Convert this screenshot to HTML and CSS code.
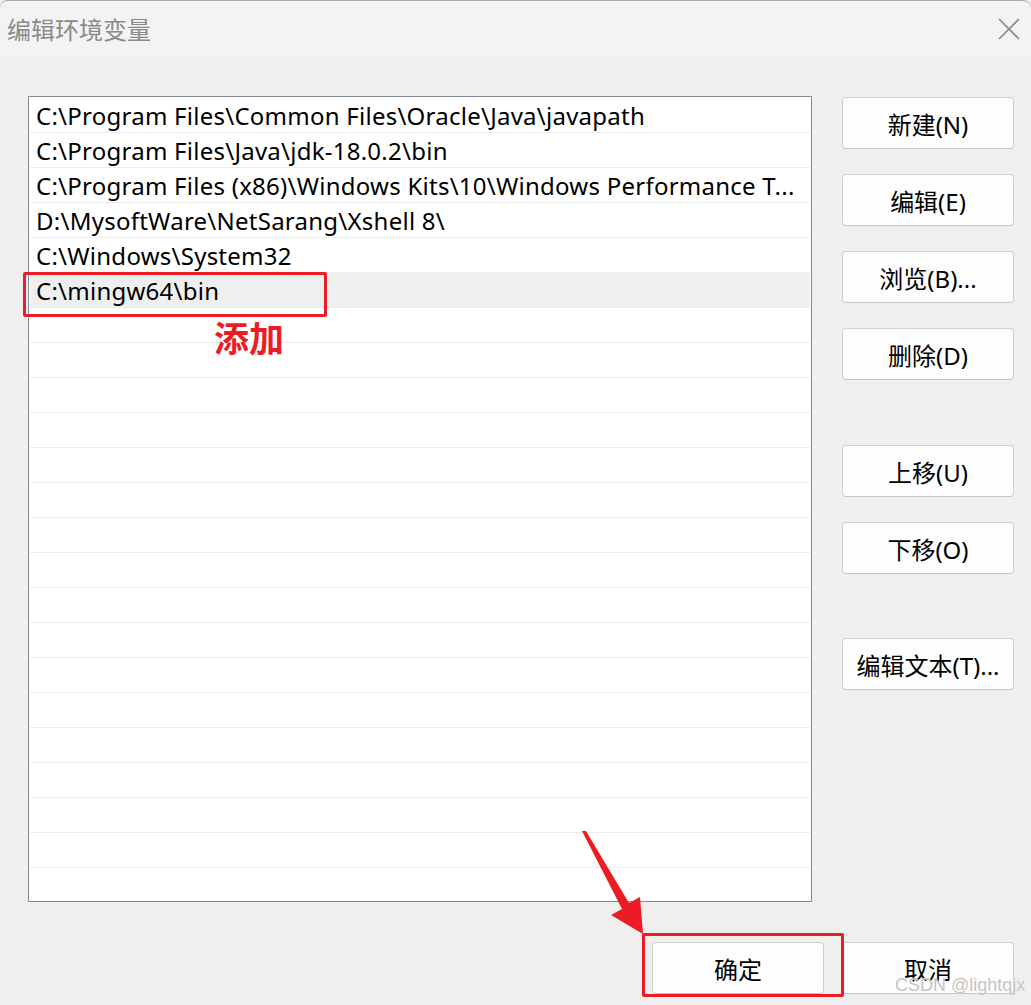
FILE: index.html
```html
<!DOCTYPE html>
<html lang="zh-CN">
<head>
<meta charset="UTF-8">
<meta name="viewport" content="width=device-width, initial-scale=1.0">
<title>编辑环境变量</title>
<link rel="stylesheet" href="styles.css">
</head>
<body>
<div class="window">
    <div class="titlebar">
        <span class="title">编辑环境变量</span>
        <svg class="close" width="22" height="22" viewBox="0 0 22 22">
            <path d="M1 1 L21 21 M21 1 L1 21" stroke="#8a8a8a" stroke-width="1.6" fill="none"/>
        </svg>
    </div>

    <div class="main">
        <div class="list">
            <div class="row">C:\Program Files\Common Files\Oracle\Java\javapath</div>
            <div class="row">C:\Program Files\Java\jdk-18.0.2\bin</div>
            <div class="row">C:\Program Files (x86)\Windows Kits\10\Windows Performance T...</div>
            <div class="row">D:\MysoftWare\NetSarang\Xshell 8\</div>
            <div class="row">C:\Windows\System32</div>
            <div class="row selected">C:\mingw64\bin</div>
            <div class="row"></div>
            <div class="row"></div>
            <div class="row"></div>
            <div class="row"></div>
            <div class="row"></div>
            <div class="row"></div>
            <div class="row"></div>
            <div class="row"></div>
            <div class="row"></div>
            <div class="row"></div>
            <div class="row"></div>
            <div class="row"></div>
            <div class="row"></div>
            <div class="row"></div>
            <div class="row"></div>
            <div class="row"></div>
            <div class="row"></div>
        </div>

        <div class="side">
            <button class="btn">新建(N)</button>
            <button class="btn">编辑(E)</button>
            <button class="btn">浏览(B)...</button>
            <button class="btn">删除(D)</button>
            <button class="btn group">上移(U)</button>
            <button class="btn">下移(O)</button>
            <button class="btn group">编辑文本(T)...</button>
        </div>
    </div>

    <div class="footer">
        <button class="btn">确定</button>
        <button class="btn">取消</button>
    </div>

    <!-- annotations drawn over the dialog -->
    <div class="mark mark-row"></div>
    <div class="note">添加</div>
    <div class="mark mark-ok"></div>
    <svg class="arrow" width="1031" height="1005" viewBox="0 0 1031 1005">
        <polygon points="582,831 586,831 629,903 640,897 643,934 611,915 622,909" fill="#ec1c24"/>
    </svg>
    <div class="watermark">CSDN @lightqjx</div>
</div>
</body>
</html>
```

FILE: styles.css
```css
body {
    margin: 0;
    padding: 0;
    background: #efefef;
    font-family: "Noto Sans", "Noto Sans CJK SC", sans-serif;
}

.window {
    position: relative;
    width: 1031px;
    height: 1005px;
    overflow: hidden;
    background: #efefef;
}

.titlebar {
    height: 56px;
    border-top: 1px solid #a9a9a9;
    border-radius: 8px 8px 0 0;
    background: #f3f3f3;
    display: flex;
    align-items: center;
    justify-content: space-between;
    padding: 0 11px 0 7px;
}

.title {
    font-family: "Noto Sans CJK SC", sans-serif;
    font-size: 24px;
    color: #8a8a8a;
    margin-top: -2px;
}

.close {
    display: block;
}

.main {
    display: flex;
    padding: 39px 17px 0 28px;
}

.list {
    width: 780px;
    height: 802px;
    border: 1px solid #828790;
    background: #fff;
    padding: 1px;
    overflow: hidden;
    flex-shrink: 0;
}

.list .row {
    height: 34px;
    line-height: 35px;
    border-bottom: 1px solid #ececec;
    padding-left: 6px;
    font-size: 24px;
    letter-spacing: 0.25px;
    color: #000;
    white-space: nowrap;
    overflow: hidden;
}

.list .row.selected {
    background: #efefef;
}

.side {
    display: flex;
    flex-direction: column;
    gap: 25px;
    margin-left: 30px;
    padding-top: 1px;
}

.side .group {
    margin-top: 40px;
}

.side .group:last-child {
    margin-top: 39px;
}

.btn {
    width: 172px;
    height: 52px;
    background: #fdfdfd;
    border: 1px solid #d0d0d0;
    border-bottom-color: #c4c4c4;
    border-radius: 4px;
    font-family: "Noto Sans", "Noto Sans CJK SC", sans-serif;
    font-size: 24px;
    color: #000;
    padding: 0;
}

.footer {
    display: flex;
    justify-content: flex-end;
    gap: 18px;
    margin-top: 40px;
    padding-right: 17px;
}

.mark {
    position: absolute;
    border: 3px solid #ec1c24;
    border-radius: 2px;
}

.mark-row {
    left: 23px;
    top: 272px;
    width: 298px;
    height: 39px;
}

.mark-ok {
    left: 642px;
    top: 933px;
    width: 196px;
    height: 58px;
}

.note {
    position: absolute;
    left: 214px;
    top: 319px;
    font-family: "Noto Sans CJK SC", sans-serif;
    font-weight: bold;
    font-size: 35px;
    line-height: 35px;
    color: #ec1c24;
}

.arrow {
    position: absolute;
    left: 0;
    top: 0;
    pointer-events: none;
}

.watermark {
    position: absolute;
    left: 895px;
    top: 975px;
    font-family: "Liberation Sans", sans-serif;
    font-size: 18px;
    color: rgba(180, 180, 180, 0.8);
    text-shadow: 0 0 1px #fff;
    white-space: nowrap;
}
```
